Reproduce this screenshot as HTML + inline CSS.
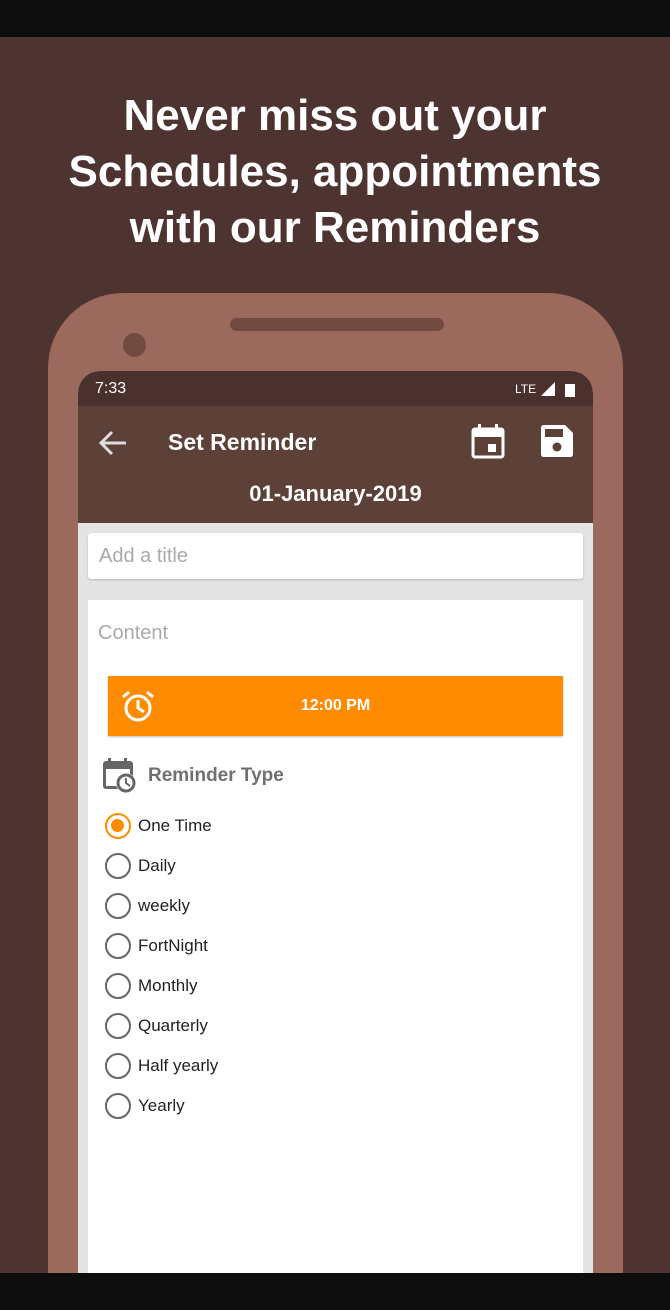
<!DOCTYPE html><html><head><style>
*{margin:0;padding:0;box-sizing:border-box}
html,body{width:670px;height:1310px;overflow:hidden}
body{background:#4e3430;position:relative;font-family:"Liberation Sans",sans-serif}
.abs{position:absolute}
h1{position:absolute;top:88px;left:0;width:670px;text-align:center;color:#fff;font-size:44px;line-height:56px;font-weight:bold}
.r{position:absolute;left:105px;width:26px;height:26px;border:2.5px solid #666;border-radius:50%}
.rl{position:absolute;left:138px;font-size:17px;color:#222}
</style></head><body>
<div class="abs" style="top:0;left:0;width:670px;height:37px;background:#0d0d0d"></div>
<h1>Never miss out your<br>Schedules, appointments<br>with our Reminders</h1>
<div class="abs" style="left:48px;top:293px;width:575px;height:980px;background:#9c6a5c;border-radius:75px 75px 0 0"></div>
<div class="abs" style="left:230px;top:318px;width:214px;height:13px;background:#714a40;border-radius:7px"></div>
<div class="abs" style="left:123px;top:333px;width:23px;height:24px;background:#714a40;border-radius:50%"></div>
<div class="abs" style="left:78px;top:371px;width:515px;height:902px;background:#e4e4e4;border-radius:22px 22px 0 0;overflow:hidden">
 <div class="abs" style="left:0;top:0;width:515px;height:35px;background:#4b312d"></div>
 <div class="abs" style="left:17px;top:9px;color:#fff;font-size:16px">7:33</div>
 <div class="abs" style="left:437px;top:11px;color:#fff;font-size:12px">LTE</div>
 <svg class="abs" style="left:462px;top:10px" width="16" height="16"><path d="M15 1V15H1Z" fill="#fff"/></svg>
 <div class="abs" style="left:487px;top:13px;width:10px;height:13px;background:#fff"></div>
 <div class="abs" style="left:0;top:35px;width:515px;height:117px;background:#5d4037"></div>
 <svg class="abs" style="left:19px;top:57px" width="32" height="30"><path d="M29 15H4M15 4L4 15L15 26" stroke="#ddd" stroke-width="3" fill="none"/></svg>
 <div class="abs" style="left:90px;top:58px;color:#fff;font-size:23px;font-weight:bold">Set Reminder</div>
 <svg class="abs" style="left:393px;top:52px" width="34" height="36" viewBox="0 0 34 36"><rect x="2" y="6" width="30" height="28" rx="2" fill="none" stroke="#fff" stroke-width="3"/><rect x="2" y="6" width="30" height="8" fill="#fff"/><rect x="7" y="1" width="3" height="7" fill="#fff"/><rect x="24" y="1" width="3" height="7" fill="#fff"/><rect x="17" y="21" width="8" height="8" fill="#fff"/></svg>
 <svg class="abs" style="left:463px;top:54px" width="32" height="32" viewBox="0 0 32 32"><path d="M3 0H24L32 8V29Q32 32 29 32H3Q0 32 0 29V3Q0 0 3 0Z" fill="#fff"/><rect x="4" y="4" width="18" height="8" fill="#5d4037"/><circle cx="16" cy="22" r="4.5" fill="#5d4037"/></svg>
 <div class="abs" style="left:0;top:110px;width:515px;text-align:center;color:#fff;font-size:22px;font-weight:bold">01-January-2019</div>
 <div class="abs" style="left:10px;top:162px;width:495px;height:46px;background:#fff;border-radius:3px;box-shadow:0 1px 2px rgba(0,0,0,.2)"></div>
 <div class="abs" style="left:21px;top:174px;color:#aaa;font-size:20px">Add a title</div>
 <div class="abs" style="left:10px;top:229px;width:495px;height:673px;background:#fff"></div>
 <div class="abs" style="left:20px;top:251px;color:#aaa;font-size:20px">Content</div>
</div>
<div class="abs" style="left:108px;top:676px;width:455px;height:60px;background:#ff8c00;box-shadow:0 1px 2px rgba(0,0,0,.25)"></div>
<svg class="abs" style="left:120px;top:688px" width="36" height="36" viewBox="0 0 36 36"><circle cx="18" cy="20" r="12" fill="none" stroke="#fff" stroke-width="3"/><path d="M18 12V20L24 24M3 9L9 4M33 9L27 4" stroke="#fff" stroke-width="3" fill="none"/></svg>
<div class="abs" style="left:108px;top:697px;width:455px;text-align:center;color:#fff;font-size:16px;font-weight:bold">12:00 PM</div>
<svg class="abs" style="left:102px;top:758px" width="36" height="36" viewBox="0 0 36 36"><rect x="1" y="3" width="30" height="28" rx="3" fill="#666"/><rect x="4" y="11" width="24" height="17" fill="#fff"/><rect x="6" y="0" width="3" height="6" fill="#666"/><rect x="22" y="0" width="3" height="6" fill="#666"/><circle cx="24" cy="25" r="10" fill="#fff"/><circle cx="24" cy="25" r="8" fill="none" stroke="#666" stroke-width="3"/><path d="M24 20V25L28 28" stroke="#666" stroke-width="2" fill="none"/></svg>
<div class="abs" style="left:148px;top:765px;color:#707070;font-size:19px;font-weight:bold">Reminder Type</div>
<div class="r" style="top:813px;border-color:#ff8c00"><div style="margin:4px;width:13px;height:13px;border-radius:50%;background:#ff8c00"></div></div><div class="rl" style="top:816px">One Time</div>
<div class="r" style="top:853px"></div><div class="rl" style="top:856px">Daily</div>
<div class="r" style="top:893px"></div><div class="rl" style="top:896px">weekly</div>
<div class="r" style="top:933px"></div><div class="rl" style="top:936px">FortNight</div>
<div class="r" style="top:973px"></div><div class="rl" style="top:976px">Monthly</div>
<div class="r" style="top:1013px"></div><div class="rl" style="top:1016px">Quarterly</div>
<div class="r" style="top:1053px"></div><div class="rl" style="top:1056px">Half yearly</div>
<div class="r" style="top:1093px"></div><div class="rl" style="top:1096px">Yearly</div>
<div class="abs" style="top:1273px;left:0;width:670px;height:37px;background:#0d0d0d"></div>
</body></html>
